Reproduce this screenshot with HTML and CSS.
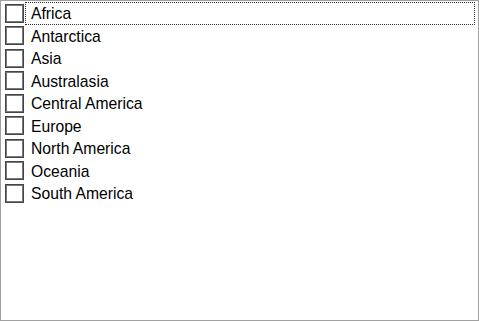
FILE: index.html
```html
<!DOCTYPE html>
<html lang="en">
<head>
    <meta charset="UTF-8">
    <meta name="viewport" content="width=device-width, initial-scale=1.0">
    <title>Regions</title>
    <link rel="stylesheet" href="styles.css">
</head>
<body>
    <div class="list">
        <div class="item"><span class="box"></span><span class="label focused">Africa</span></div>
        <div class="item"><span class="box"></span><span class="label">Antarctica</span></div>
        <div class="item"><span class="box"></span><span class="label">Asia</span></div>
        <div class="item"><span class="box"></span><span class="label">Australasia</span></div>
        <div class="item"><span class="box"></span><span class="label">Central America</span></div>
        <div class="item"><span class="box"></span><span class="label">Europe</span></div>
        <div class="item"><span class="box"></span><span class="label">North America</span></div>
        <div class="item"><span class="box"></span><span class="label">Oceania</span></div>
        <div class="item"><span class="box"></span><span class="label">South America</span></div>
    </div>
</body>
</html>
```

FILE: styles.css
```css
body {
    margin: 0;
    font-family: "Liberation Sans", Arial, sans-serif;
    font-size: 15.7px;
    color: #000;
    background: #fff;
}

.list {
    width: 479px;
    height: 321px;
    box-sizing: border-box;
    border: 1px solid #a0a0a0;
    padding-top: 1px;
    background: #fff;
}

.item {
    display: flex;
    align-items: center;
    height: 22.5px;
    padding-left: 4px;
    padding-right: 3px;
}

.box {
    width: 17px;
    height: 17px;
    flex: none;
    border: 1px solid #444;
    box-shadow: inset 0 0 0 1px #7a7a7a;
    background: #fff;
}

.label {
    flex: 1;
    height: 100%;
    box-sizing: border-box;
    display: flex;
    align-items: center;
    margin-left: 1px;
    padding-left: 5px;
    padding-top: 2px;
    border: 1px solid transparent;
    white-space: nowrap;
}

.label.focused {
    border: 1px dotted #333;
}
```
